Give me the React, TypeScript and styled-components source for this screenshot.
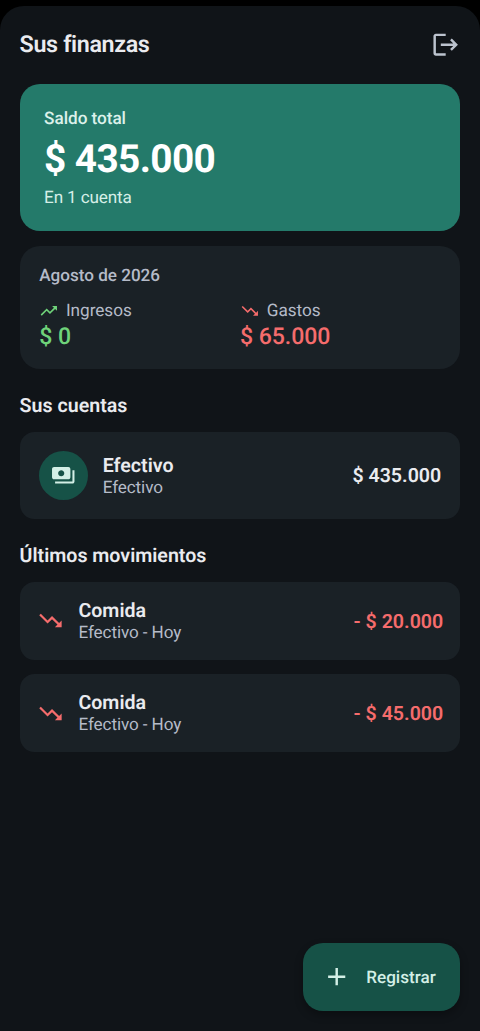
import React from "react";
import styled, { createGlobalStyle } from "styled-components";
import { MdAdd, MdLogout, MdPayments, MdTrendingDown, MdTrendingUp } from "react-icons/md";

const colors = {
  background: "#101418",
  surface: "#1a2126",
  balance: "#247a6a",
  primary: "#165247",
  onPrimary: "#d3efe6",
  text: "#eaebef",
  muted: "#b5bbc8",
  income: "#6fd37a",
  expense: "#f56c6c",
};

const GlobalStyle = createGlobalStyle`
  * { box-sizing: border-box; }
  body {
    margin: 0;
    background: #000;
    font-family: Roboto, "Liberation Sans", sans-serif;
    text-rendering: geometricPrecision;
  }
`;

const Screen = styled.main`
  display: flex;
  flex-direction: column;
  height: 1025px;
  margin-top: 6px;
  padding: 0 19.6px 20px;
  border-radius: 24px 24px 0 0;
  background: ${colors.background};
  color: ${colors.text};
  overflow: hidden;
`;

const Header = styled.header`
  display: flex;
  align-items: center;
  justify-content: space-between;
  height: 78px;
  flex: none;
`;

const Title = styled.h1`
  margin: 0 0 1.6px;
  font-size: 23.3px;
  line-height: 28px;
  font-weight: 600;
  letter-spacing: -0.36px;
  font-variant-ligatures: common-ligatures;
`;

const IconButton = styled.button`
  display: flex;
  padding: 0;
  border: 0;
  background: none;
  color: #bcc3ce;
  font-size: 29.4px;
`;

const BalanceCard = styled.section`
  display: flex;
  flex-direction: column;
  height: 147px;
  padding: 24.5px;
  border-radius: 20px;
  background: ${colors.balance};
`;

const BalanceLabel = styled.span`
  margin-top: 0.5px;
  font-size: 17.2px;
  line-height: 20px;
  font-weight: 500;
  letter-spacing: -0.05px;
  color: #dcf1ea;
`;

const BalanceAmount = styled.strong`
  margin: 5.6px 0 4.2px;
  font-size: 38.8px;
  line-height: 49.5px;
  font-weight: 700;
  letter-spacing: -0.62px;
  color: #fff;
`;

const BalanceNote = styled.span`
  font-size: 17.15px;
  line-height: 20.4px;
  letter-spacing: -0.15px;
  color: #d6eee7;
`;

const MonthCard = styled.section`
  height: 123.4px;
  margin-top: 14.6px;
  padding: 20.6px 19.6px 0;
  border-radius: 20px;
  background: ${colors.surface};
`;

const MonthTitle = styled.h2`
  margin: 0 0 14.3px;
  font-size: 17.1px;
  line-height: 20.4px;
  font-weight: 500;
  color: ${colors.muted};
`;

const MonthColumns = styled.div`
  display: grid;
  grid-template-columns: 1fr 1fr;
`;

const StatLabel = styled.div<{ $tone: string }>`
  display: flex;
  align-items: center;
  gap: 7.2px;
  font-size: 17.2px;
  line-height: 20.4px;
  letter-spacing: -0.05px;
  color: ${colors.muted};

  svg {
    font-size: 19.6px;
    color: ${(p) => p.$tone};
  }
`;

const StatValue = styled.div<{ $tone: string }>`
  margin-top: 1.3px;
  font-size: 23.1px;
  line-height: 27px;
  font-weight: 500;
  letter-spacing: -0.08px;
  color: ${(p) => p.$tone};
`;

const SectionTitle = styled.h2`
  margin: 24.7px 0 14.1px;
  font-size: 19.62px;
  line-height: 24px;
  font-weight: 600;
`;

const AccountCard = styled.article`
  display: flex;
  align-items: center;
  gap: 14.5px;
  height: 87.4px;
  padding: 0 19.2px 0 19.6px;
  border-radius: 14.7px;
  background: ${colors.surface};
`;

const Avatar = styled.div`
  display: flex;
  align-items: center;
  justify-content: center;
  width: 49px;
  height: 49px;
  border-radius: 50%;
  background: ${colors.primary};
  color: ${colors.onPrimary};
  font-size: 24.5px;
`;

const Details = styled.div`
  display: flex;
  flex: 1;
  flex-direction: column;
`;

const AccountDetails = styled(Details)`
  padding-top: 1.4px;
`;

const Name = styled.span`
  font-size: 19.6px;
  line-height: 23px;
  font-weight: 600;
`;

const Caption = styled.span`
  padding-top: 0.8px;
  font-size: 17.1px;
  line-height: 20.2px;
  letter-spacing: -0.1px;
  color: ${colors.muted};
`;

const Amount = styled.span<{ $tone?: string }>`
  padding-top: 1.7px;
  font-size: 19.6px;
  line-height: 24px;
  font-weight: 600;
  color: ${(p) => p.$tone ?? colors.text};
`;

const MovementList = styled.div`
  display: flex;
  flex-direction: column;
  gap: 14.7px;
`;

const MovementCard = styled.article`
  display: flex;
  align-items: center;
  gap: 14.8px;
  height: 77.6px;
  padding: 0 17.2px;
  border-radius: 14.7px;
  background: ${colors.surface};

  svg {
    font-size: 26.9px;
    color: ${colors.expense};
  }
`;

const RegisterButton = styled.button`
  display: flex;
  align-items: center;
  align-self: flex-end;
  gap: 14.7px;
  height: 68.4px;
  margin-top: auto;
  padding: 0 24.7px 0 19.6px;
  border: 0;
  border-radius: 20px;
  background: ${colors.primary};
  color: ${colors.onPrimary};
  font-family: inherit;
  font-size: 17.1px;
  font-weight: 500;
  text-rendering: inherit;
  box-shadow: 0 4px 8px rgba(0, 0, 0, 0.3);

  svg {
    font-size: 29.4px;
  }
`;

const RegisterLabel = styled.span`
  padding-top: 1.6px;
  line-height: 20px;
`;

const movements = [
  { name: "Comida", detail: "Efectivo - Hoy", amount: "- $ 20.000" },
  { name: "Comida", detail: "Efectivo - Hoy", amount: "- $ 45.000" },
];

export default function App() {
  return (
    <>
      <GlobalStyle />
      <Screen>
        <Header>
          <Title>Sus finanzas</Title>
          <IconButton aria-label="Salir">
            <MdLogout />
          </IconButton>
        </Header>

        <BalanceCard>
          <BalanceLabel>Saldo total</BalanceLabel>
          <BalanceAmount>$ 435.000</BalanceAmount>
          <BalanceNote>En 1 cuenta</BalanceNote>
        </BalanceCard>

        <MonthCard>
          <MonthTitle>Agosto de 2026</MonthTitle>
          <MonthColumns>
            <div>
              <StatLabel $tone={colors.income}>
                <MdTrendingUp />
                Ingresos
              </StatLabel>
              <StatValue $tone={colors.income}>$ 0</StatValue>
            </div>
            <div>
              <StatLabel $tone={colors.expense}>
                <MdTrendingDown />
                Gastos
              </StatLabel>
              <StatValue $tone={colors.expense}>$ 65.000</StatValue>
            </div>
          </MonthColumns>
        </MonthCard>

        <SectionTitle>Sus cuentas</SectionTitle>
        <AccountCard>
          <Avatar>
            <MdPayments />
          </Avatar>
          <AccountDetails>
            <Name>Efectivo</Name>
            <Caption>Efectivo</Caption>
          </AccountDetails>
          <Amount>$ 435.000</Amount>
        </AccountCard>

        <SectionTitle>Últimos movimientos</SectionTitle>
        <MovementList>
          {movements.map((m) => (
            <MovementCard key={m.amount}>
              <MdTrendingDown />
              <Details>
                <Name>{m.name}</Name>
                <Caption>{m.detail}</Caption>
              </Details>
              <Amount $tone={colors.expense}>{m.amount}</Amount>
            </MovementCard>
          ))}
        </MovementList>

        <RegisterButton>
          <MdAdd />
          <RegisterLabel>Registrar</RegisterLabel>
        </RegisterButton>
      </Screen>
    </>
  );
}
